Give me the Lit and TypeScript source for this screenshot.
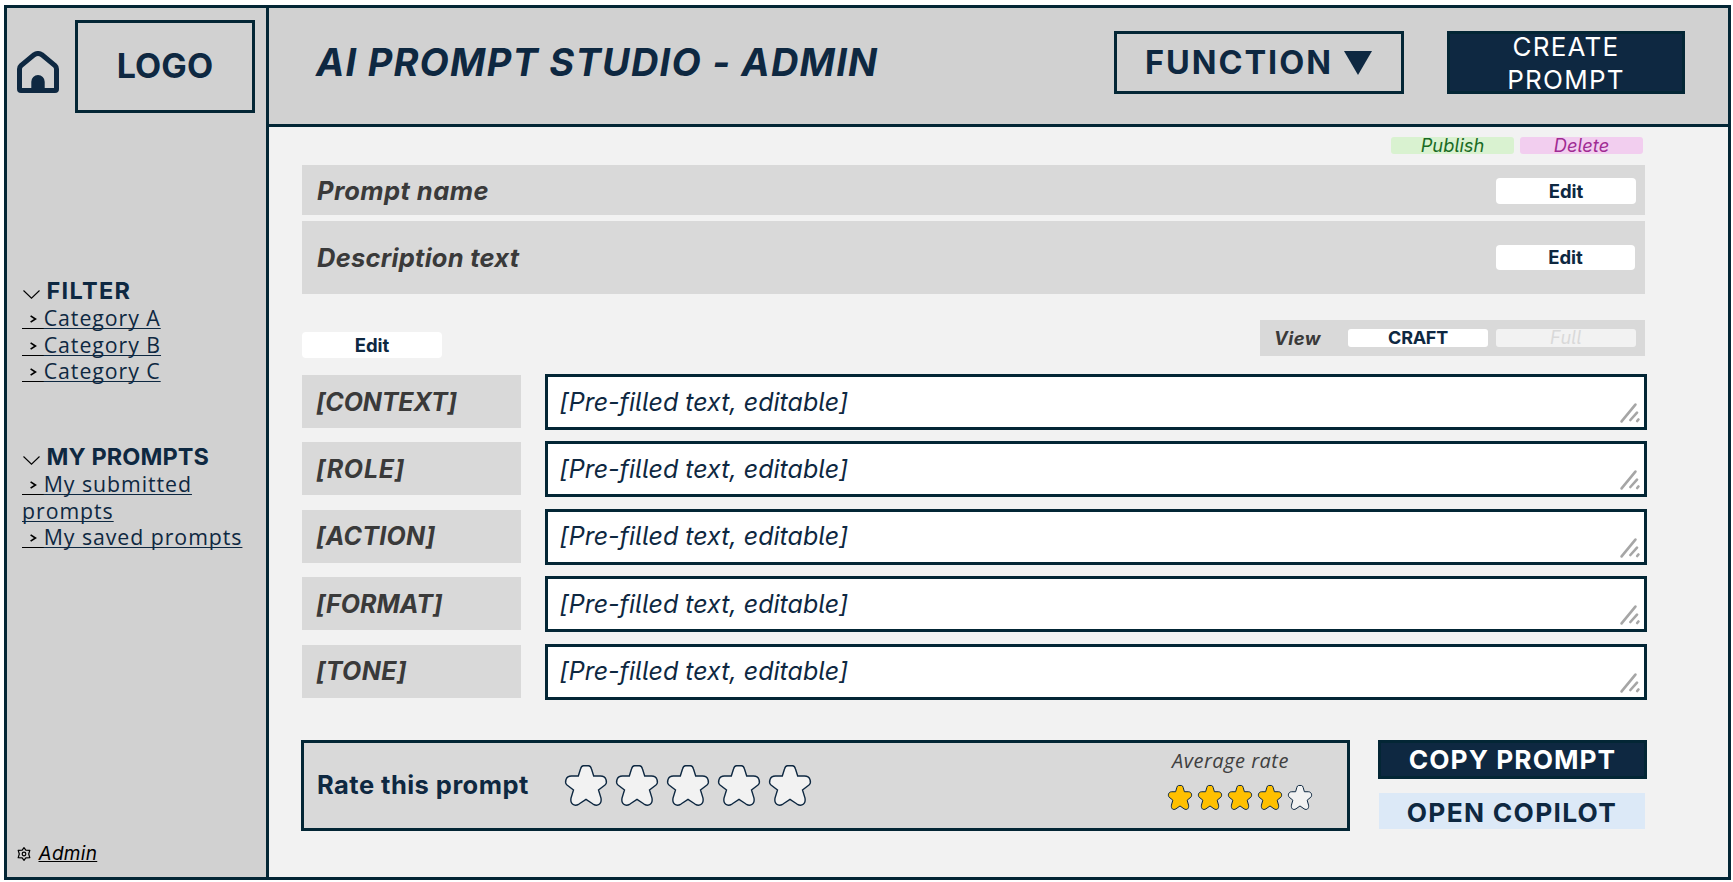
import { LitElement, html, css } from "lit";
import { customElement } from "lit/decorators.js";

const FIELDS = [
  ["[CONTEXT]", "context"],
  ["[ROLE]", "role"],
  ["[ACTION]", "action"],
  ["[FORMAT]", "format"],
  ["[TONE]", "tone"],
];

const star = (cls: string) => html`<svg class=${cls} viewBox="0 0 42 41.5" preserveAspectRatio="none">
  <path vector-effect="non-scaling-stroke" d="M18.5 .8H23.5Q25.7 1 26.5 4L28.7 11.2H35.5C41.8 11.2 42.5 18 40 20.2L33.5 25.2L36 33.5C37 39 33 42.5 28 39.5L21 34.8L14 39.5C9 42.5 5 39 6 33.5L8.5 25.2L2 20.2C-.5 18 .2 11.2 6.5 11.2H13.3L15.5 4Q16.3 1 18.5 .8Z"/>
</svg>`;

const chevron = html`<svg class="chevron" width="17" height="9" viewBox="0 0 17 9"><path d="M.5 .5L8.5 8.2L16.5 .5"/></svg>`;

const mark = html`<span class="mark"><svg width="7" height="8" viewBox="0 0 7 8"><path d="M.6 .9L5.4 4L.6 7.1"/></svg></span>`;

@customElement("app-root")
export class AppRoot extends LitElement {
  static styles = css`
    :host {
      display: block;
      height: 882px;
      background: #fff;
      overflow: hidden;
      font-family: "Inter", "Liberation Sans", sans-serif;
      color: #0e2841;
    }
    * { box-sizing: border-box; }
    svg { display: block; flex: none; }
    .frame {
      margin: 5px 2px 0 4px;
      height: 875px;
      border: 3px solid #032635;
      display: grid;
      grid-template-columns: 262px 1fr;
      background: #f2f2f2;
    }
    .sidebar {
      background: #d1d1d1;
      border-right: 3px solid #032635;
      display: flex;
      flex-direction: column;
    }
    .brand { display: flex; gap: 16px; padding: 12px 11px 0 10px; height: 105px; }
    .home { margin-top: 31px; }
    .logo {
      flex: 1;
      border: 3px solid #032635;
      display: flex;
      align-items: center;
      justify-content: center;
      padding-bottom: 3px;
      font-size: 34px;
      font-weight: 700;
      letter-spacing: .1px;
    }
    .group { padding-left: 15px; line-height: 26.5px; }
    .filter { margin-top: 165.6px; }
    .mine { margin-top: 60px; }
    .group h2 {
      margin: 0;
      font-size: 23.5px;
      font-weight: 700;
      line-height: 26.5px;
      height: 26.5px;
      letter-spacing: 1.3px;
      display: flex;
      align-items: center;
      gap: 6.5px;
      padding: 0 0 1px 1px;
    }
    .mine h2 { letter-spacing: .1px; }
    .chevron { margin-top: 6px; fill: none; stroke: #000; stroke-width: 1.1; }
    .link {
      display: block;
      font-family: "Open Sans", sans-serif;
      font-size: 21.3px;
      letter-spacing: .95px;
    }
    .link u { text-decoration-thickness: 1px; text-underline-offset: 2px; text-decoration-skip-ink: none; }
    .mark {
      display: inline-block;
      width: 21.7px;
      height: 15px;
      padding: 1px 0 0 8px;
      overflow: hidden;
      vertical-align: -3px;
      border-bottom: 1px solid #000;
    }
    .mark path { fill: none; stroke: #000; stroke-width: 1.7; }
    .admin {
      margin: auto 0 12px 10px;
      display: flex;
      align-items: center;
      gap: 7.5px;
      height: 23px;
      color: #000;
      font-style: italic;
      font-size: 19px;
      letter-spacing: .3px;
      text-decoration: underline;
      text-decoration-thickness: 1px;
      text-underline-offset: 1px;
    }
    .gear { fill: none; stroke: #000; stroke-width: 1.2; }
    .main { display: flex; flex-direction: column; min-width: 0; }
    header {
      height: 119px;
      background: #d1d1d1;
      border-bottom: 3px solid #032635;
      display: flex;
      padding: 23px 43px 0 47px;
    }
    h1 {
      margin: 0 auto 0 0;
      height: 63px;
      line-height: 63px;
      font-size: 38px;
      font-weight: 700;
      font-style: italic;
      letter-spacing: 1.2px;
      white-space: nowrap;
    }
    .function {
      width: 290px;
      height: 63px;
      border: 3px solid #032635;
      display: flex;
      align-items: center;
      padding-left: 28px;
      gap: 11px;
      font-size: 32.5px;
      font-weight: 700;
      letter-spacing: 1.95px;
    }
    .create {
      margin-left: 43px;
      width: 238px;
      height: 63px;
      background: #0e2841;
      border: 3px solid #032635;
      color: #fff;
      text-align: center;
      font-size: 26px;
      line-height: 33px;
      letter-spacing: 1.25px;
      display: flex;
      align-items: center;
      justify-content: center;
    }
    .body { padding: 10px 0 0 33px; width: 1378px; display: flex; flex-direction: column; }
    .tailed { font-feature-settings: "cv05"; }
    .actions { display: flex; justify-content: flex-end; gap: 6px; padding-right: 4px; height: 17px; }
    .pill {
      height: 17px;
      width: 123px;
      border-radius: 3px;
      display: flex;
      align-items: center;
      justify-content: center;
      font-size: 18.3px;
      font-style: italic;
      line-height: 17px;
    }
    .publish { background: #d9f2d0; color: #196b24; }
    .delete { background: #f2ceef; color: #a02b93; }
    .row {
      width: 1343px;
      background: #d9d9d9;
      display: flex;
      align-items: center;
      justify-content: space-between;
      padding: 0 9px 0 15px;
      color: #3a3a3a;
      font-size: 25.5px;
      font-weight: 700;
      font-style: italic;
      letter-spacing: .45px;
    }
    .name { margin-top: 11px; height: 50px; }
    .desc { margin-top: 6px; height: 73px; letter-spacing: .25px; padding-right: 10px; }
    .edit {
      width: 140px;
      height: 26px;
      border-radius: 4px;
      background: #fff;
      color: #0e2841;
      display: flex;
      align-items: center;
      justify-content: center;
      font-size: 18.5px;
      font-style: normal;
      font-weight: 700;
      letter-spacing: 0;
      padding-bottom: 1px;
    }
    .name .edit { margin-top: 2px; }
    .desc .edit { height: 25px; width: 139px; padding-bottom: 2px; }
    .tools { display: flex; width: 1343px; justify-content: space-between; margin-top: 26px; height: 38px; }
    .tools > .edit { margin-top: 12px; }
    .view {
      width: 385px;
      height: 36px;
      background: #d9d9d9;
      display: flex;
      align-items: center;
      padding: 0 9px 0 14px;
      font-size: 18px;
      font-weight: 700;
    }
    .view em { color: #3a3a3a; font-size: 18.5px; letter-spacing: .4px; margin-right: auto; padding-bottom: 1px; }
    .tab {
      width: 140px;
      height: 18px;
      line-height: 18px;
      border-radius: 3px;
      background: #fff;
      text-align: center;
      letter-spacing: -.28px;
      margin-left: 8px;
    }
    .off { background: #f2f2f2; color: #d9d9d9; font-style: italic; font-weight: 400; letter-spacing: .3px; }
    .fields { display: flex; flex-direction: column; gap: 11.45px; margin-top: 16px; }
    .field { display: grid; grid-template-columns: 219px 1102px; column-gap: 24px; height: 56px; align-items: start; }
    .label {
      height: 53px;
      margin-top: 1px;
      background: #d9d9d9;
      display: flex;
      align-items: center;
      padding-left: 14px;
      color: #3a3a3a;
      font-size: 25px;
      font-weight: 700;
      font-style: italic;
    }
    .context { letter-spacing: -.12px; }
    .role { letter-spacing: .77px; }
    .action { letter-spacing: .26px; }
    .format { letter-spacing: .05px; }
    .tone { letter-spacing: .38px; }
    .input {
      height: 56px;
      border: 3px solid #032635;
      background: #fff;
      display: flex;
      align-items: center;
      justify-content: space-between;
      padding: 0 4px 1px 11.5px;
      font-size: 25px;
      font-style: italic;
      letter-spacing: .02px;
    }
    .grip { align-self: flex-end; margin-bottom: 3px; fill: none; stroke: #a6a6a6; stroke-width: 2.6; stroke-linecap: round; }
    .footer { display: flex; gap: 28px; margin-top: 40.2px; height: 91px; width: 1346px; margin-left: -1px; }
    .rate {
      width: 1049px;
      background: #d9d9d9;
      border: 3px solid #032635;
      display: flex;
      align-items: center;
      padding-left: 13px;
      font-size: 25.5px;
      font-weight: 700;
      letter-spacing: .46px;
    }
    .rate > span { width: 212px; margin-top: -1px; }
    .stars { display: flex; gap: 9px; margin-left: 36px; }
    .big { width: 42px; height: 41px; overflow: visible; fill: #f2f2f2; stroke: #0e2841; stroke-width: 1.4; }
    .average {
      margin: 0 33px 0 auto;
      width: 146px;
      height: 71px;
      display: flex;
      flex-direction: column;
      justify-content: space-between;
    }
    .average em {
      color: #404040;
      font-family: "Open Sans", sans-serif;
      font-size: 20px;
      font-weight: 400;
      line-height: 22px;
      letter-spacing: .5px;
      padding-left: 4px;
    }
    .average .stars { gap: 6px; margin: 0 0 11px; }
    .small { width: 24px; height: 25px; overflow: visible; fill: #f2f2f2; stroke: #0e2841; stroke-width: 1; }
    .gold { fill: #ffc000; }
    .buttons { flex: 1; display: flex; flex-direction: column; gap: 14px; font-size: 26.3px; font-weight: 700; }
    .copy {
      height: 39px;
      background: #0e2841;
      border: 3px solid #032635;
      color: #fff;
      display: flex;
      align-items: center;
      justify-content: center;
      letter-spacing: 1.05px;
    }
    .open {
      height: 36px;
      margin: 0 2px 0 1px;
      padding-top: 4px;
      background: #dce9f7;
      display: flex;
      align-items: center;
      justify-content: center;
      letter-spacing: 1.3px;
    }
  `;

  render() {
    return html`
      <div class="frame">
        <aside class="sidebar">
          <div class="brand">
            <svg class="home" width="42" height="42" viewBox="0 0 42 42">
              <path d="M2.5 18Q2.5 16 4 14.6L17 3.8Q21 1.2 25 3.8L38 14.6Q39.5 16 39.5 18V38Q39.5 39.5 38 39.5H4Q2.5 39.5 2.5 38Z" fill="none" stroke="#0e2841" stroke-width="5"/>
              <path d="M14.3 39V30.7a6.7 6.7 0 0 1 13.4 0V39Z" fill="#0e2841"/>
            </svg>
            <div class="logo">LOGO</div>
          </div>
          <nav class="group filter">
            <h2>${chevron}FILTER</h2>
            ${["Category A", "Category B", "Category C"].map((t) => html`<a class="link">${mark}<u>${t}</u></a>`)}
          </nav>
          <nav class="group mine">
            <h2>${chevron}MY PROMPTS</h2>
            ${["My submitted prompts", "My saved prompts"].map((t) => html`<a class="link">${mark}<u>${t}</u></a>`)}
          </nav>
          <div class="admin">
            <svg class="gear" width="14" height="14" viewBox="0 0 14 14">
              <path d="M7 .7L8.8 3.2L12.8 3.3L11.7 7L12.8 10.7L8.8 10.8L7 13.3L5.2 10.8L1.2 10.7L2.3 7L1.2 3.3L5.2 3.2Z" stroke-linejoin="round"/>
              <circle cx="7" cy="7" r="1.8"/>
            </svg>
            <span>Admin</span>
          </div>
        </aside>
        <div class="main">
          <header>
            <h1>AI PROMPT STUDIO - ADMIN</h1>
            <div class="function">FUNCTION
              <svg width="28" height="24" viewBox="0 0 28 24"><path d="M0 0H28L14 24Z" fill="#0e2841"/></svg>
            </div>
            <div class="create">CREATE<br>PROMPT</div>
          </header>
          <div class="body">
            <div class="actions tailed">
              <div class="pill publish">Publish</div>
              <div class="pill delete">Delete</div>
            </div>
            <div class="row name">Prompt name<div class="edit">Edit</div></div>
            <div class="row desc">Description text<div class="edit">Edit</div></div>
            <div class="tools">
              <div class="edit">Edit</div>
              <div class="view tailed"><em>View</em><div class="tab">CRAFT</div><div class="tab off">Full</div></div>
            </div>
            <div class="fields">
              ${FIELDS.map(([t, c]) => html`<div class="field">
                <div class="label ${c}">${t}</div>
                <div class="input tailed">[Pre-filled text, editable]
                  <svg class="grip" width="20" height="20" viewBox="0 0 20 20">
                    <path d="M1.6 18.4L15.4 1.6M10.4 17L17 9.6M17.2 18L18.4 16.5"/>
                  </svg>
                </div>
              </div>`)}
            </div>
            <div class="footer">
              <div class="rate"><span>Rate this prompt</span>
                <div class="stars">${[1, 2, 3, 4, 5].map(() => star("big"))}</div>
                <div class="average">
                  <em>Average rate</em>
                  <div class="stars">${[1, 2, 3, 4, 5].map((n) => star(n < 5 ? "small gold" : "small"))}</div>
                </div>
              </div>
              <div class="buttons">
                <div class="copy">COPY PROMPT</div>
                <div class="open">OPEN COPILOT</div>
              </div>
            </div>
          </div>
        </div>
      </div>
    `;
  }
}
